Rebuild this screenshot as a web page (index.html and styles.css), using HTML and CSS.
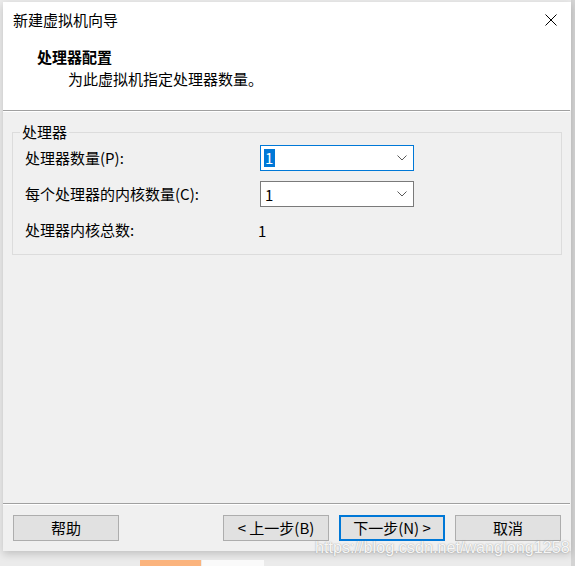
FILE: index.html
```html
<!DOCTYPE html>
<html lang="zh-CN">
<head>
<meta charset="utf-8">
<title>新建虚拟机向导</title>
<link rel="stylesheet" href="styles.css">
</head>
<body>
<div class="page">
  <div class="dialog">
    <div class="titlebar">
      <span class="title">新建虚拟机向导</span>
      <span class="close">
        <svg width="12" height="12" viewBox="0 0 12 12"><path d="M0.5 0.5 L11.5 11.5 M11.5 0.5 L0.5 11.5" stroke="#000" stroke-width="1" fill="none"/></svg>
      </span>
    </div>
    <div class="header">
      <div class="heading">处理器配置</div>
      <div class="subheading">为此虚拟机指定处理器数量。</div>
    </div>
    <div class="sep"></div>
    <div class="content">
      <fieldset class="group">
        <legend>处理器</legend>
        <div class="grid">
          <div class="label">处理器数量(P):</div>
          <div class="select focused"><span class="sel-text">1</span><svg class="chev" width="10" height="6" viewBox="0 0 10 6"><path d="M0.5 0.5 L5 5 L9.5 0.5" stroke="#5a5a5a" fill="none"/></svg></div>
          <div class="label">每个处理器的内核数量(C):</div>
          <div class="select"><span class="val">1</span><svg class="chev" width="10" height="6" viewBox="0 0 10 6"><path d="M0.5 0.5 L5 5 L9.5 0.5" stroke="#5a5a5a" fill="none"/></svg></div>
          <div class="label">处理器内核总数:</div>
          <div class="value">1</div>
        </div>
      </fieldset>
    </div>
    <div class="sep"></div>
    <div class="footer">
      <button class="btn">帮助</button>
      <div class="right">
        <button class="btn">&lt; 上一步(B)</button>
        <button class="btn primary">下一步(N) &gt;</button>
        <button class="btn">取消</button>
      </div>
    </div>
  </div>
  <div class="below">
    <span class="tab orange"></span>
    <span class="tab white"></span>
  </div>
  <div class="watermark">https://blog.csdn.net/wanglong1258</div>
</div>
</body>
</html>
```

FILE: styles.css
```css
* { box-sizing: border-box; }
html, body {
  margin: 0;
  padding: 0;
  background: #ebebeb;
  width: 575px;
  height: 566px;
  overflow: hidden;
  font-family: "Noto Sans CJK SC", "Noto Sans", sans-serif;
  font-size: 15px;
  color: #000;
}
.page {
  position: relative;
  width: 575px;
  height: 566px;
  padding: 2px 0 0 3px;
  background: linear-gradient(to right, #ebebeb 0, #ebebeb 571px, #d4d4d4 571px);
}
.dialog {
  width: 568px;
  height: 549px;
  background: #f0f0f0;
  display: flex;
  flex-direction: column;
  box-shadow: 0 3px 8px rgba(0,0,0,0.18);
}
.titlebar {
  height: 36px;
  background: #fff;
  display: flex;
  align-items: center;
  justify-content: space-between;
  padding: 0 14px 0 10px;
}
.title {
  font-size: 15px;
  line-height: 20px;
}
.close {
  display: flex;
  width: 12px;
  height: 12px;
}
.header {
  height: 72px;
  background: #fff;
  padding: 8px 0 0 34px;
}
.heading {
  font-weight: bold;
  font-size: 15px;
  line-height: 22px;
}
.subheading {
  padding-left: 31px;
  font-size: 15px;
  line-height: 22px;
}
.sep {
  height: 2px;
  border-top: 1px solid #a0a0a0;
  background: #fff;
  width: 567px;
}
.content {
  flex: 1;
  padding: 10px 0 0 9px;
}
.group {
  margin: 0;
  width: 550px;
  border: 1px solid #dcdcdc;
  padding: 3px 12px 11px 12px;
}
.group legend {
  padding: 0 2px;
  margin-left: -5px;
  line-height: 20px;
  font-size: 15px;
}
.grid {
  display: grid;
  grid-template-columns: 235px 154px;
  grid-auto-rows: 26px;
  row-gap: 10px;
  align-items: center;
}
.label {
  line-height: 20px;
}
.select {
  height: 26px;
  background: #fff;
  border: 1px solid #7a7a7a;
  display: flex;
  align-items: center;
  justify-content: space-between;
  padding: 0 6px 0 3px;
}
.select.focused {
  border-color: #0078d7;
}
.sel-text {
  background: #0078d7;
  color: #fff;
  line-height: 18px;
  padding: 0 2px 0 1px;
}
.val {
  padding-left: 1px;
}
.value {
  margin-left: -2px;
}
.chev { display: block; }
.footer {
  height: 46px;
  display: flex;
  justify-content: space-between;
  padding: 10px 10px 0 10px;
}
.right {
  display: flex;
  gap: 10px;
}
.btn {
  font-family: "Noto Sans CJK SC", "Noto Sans", sans-serif;
  font-size: 15px;
  width: 106px;
  height: 26px;
  background: #e1e1e1;
  border: 1px solid #adadad;
  padding: 0;
  margin: 0;
  color: #000;
  line-height: 20px;
}
.btn.primary {
  border: 2px solid #0078d7;
}
.below {
  display: flex;
  padding-left: 137px;
  margin-top: 9px;
}
.tab {
  display: block;
  height: 6px;
}
.tab.orange { width: 61px; background: #fbb47e; margin-right: 1px; }
.tab.white { width: 62px; background: #fafafa; }
.watermark {
  position: absolute;
  left: 315px;
  top: 538px;
  font-family: "Liberation Sans", Arial, sans-serif;
  font-size: 16.2px;
  line-height: 18px;
  color: rgba(255,255,255,0.92);
  text-shadow: 0 0 1px rgba(120,120,120,0.6), 0 0 2px rgba(150,150,150,0.4);
  white-space: nowrap;
}
```
